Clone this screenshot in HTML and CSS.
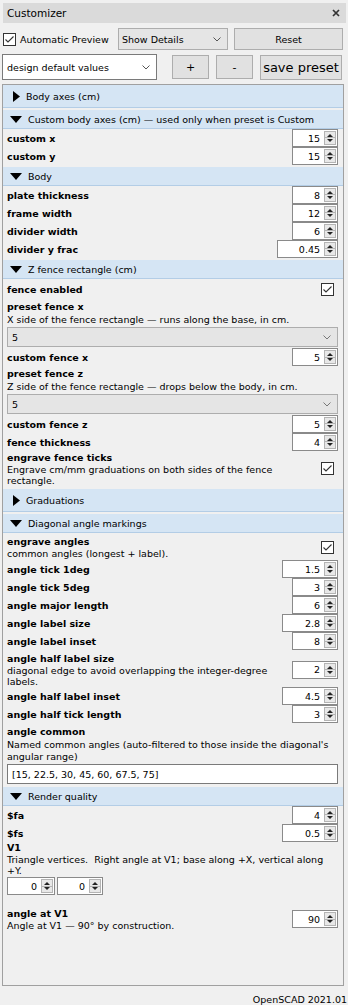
FILE: index.html
```html
<!DOCTYPE html>
<html>
<head>
<meta charset="utf-8">
<link rel="stylesheet" href="styles.css">
</head>
<body>
<div class="titlebar">
  <span>Customizer</span>
  <svg class="close" width="8" height="8" viewBox="0 0 8 8"><path d="M1 1L7 7M7 1L1 7" stroke="#333" stroke-width="1.7"/></svg>
</div>

<div class="bar1">
  <div class="autoprev">
    <svg class="cb" width="13" height="13" viewBox="0 0 13 13"><rect x="0.5" y="0.5" width="12" height="12" fill="#fff" stroke="#333"/><path d="M2.5 6.5L5 9L10.5 3.5" fill="none" stroke="#333" stroke-width="1.1"/></svg>
    <span>Automatic Preview</span>
  </div>
  <div class="combo gray details"><span>Show Details</span><svg class="chev" width="8" height="5" viewBox="0 0 8 5"><path d="M0.5 0.5L4 4L7.5 0.5" fill="none" stroke="#555"/></svg></div>
  <div class="btn reset">Reset</div>
</div>

<div class="bar2">
  <div class="combo white preset"><span>design default values</span><svg class="chev" width="8" height="5" viewBox="0 0 8 5"><path d="M0.5 0.5L4 4L7.5 0.5" fill="none" stroke="#555"/></svg></div>
  <div class="btn sq plus">+</div>
  <div class="btn sq minus">-</div>
  <div class="btn save">save preset</div>
</div>

<div class="frame">
  <div class="ghead col first"><svg class="tri-r" width="7" height="11" viewBox="0 0 7 11"><path d="M0 0L7 5.5L0 11Z" fill="#000"/></svg><span>Body axes (cm)</span></div>

  <div class="ghead"><svg class="tri-d" width="12" height="7" viewBox="0 0 12 7"><path d="M0 0H12L6 7Z" fill="#000"/></svg><span>Custom body axes (cm) — used only when preset is Custom</span></div>
  <div class="row"><span class="lbl">custom x</span><div class="spin"><span>15</span><i class="arr"></i></div></div>
  <div class="row"><span class="lbl">custom y</span><div class="spin"><span>15</span><i class="arr"></i></div></div>

  <div class="ghead"><svg class="tri-d" width="12" height="7" viewBox="0 0 12 7"><path d="M0 0H12L6 7Z" fill="#000"/></svg><span>Body</span></div>
  <div class="row"><span class="lbl">plate thickness</span><div class="spin"><span>8</span><i class="arr"></i></div></div>
  <div class="row"><span class="lbl">frame width</span><div class="spin"><span>12</span><i class="arr"></i></div></div>
  <div class="row"><span class="lbl">divider width</span><div class="spin"><span>6</span><i class="arr"></i></div></div>
  <div class="row"><span class="lbl">divider y frac</span><div class="spin w61"><span>0.45</span><i class="arr"></i></div></div>

  <div class="ghead"><svg class="tri-d" width="12" height="7" viewBox="0 0 12 7"><path d="M0 0H12L6 7Z" fill="#000"/></svg><span>Z fence rectangle (cm)</span></div>
  <div class="row cbrow"><span class="lbl">fence enabled</span><svg class="cb" width="13" height="13" viewBox="0 0 13 13"><rect x="0.5" y="0.5" width="12" height="12" fill="#fff" stroke="#333"/><path d="M2.5 6.5L5 9L10.5 3.5" fill="none" stroke="#333" stroke-width="1.1"/></svg></div>
  <div class="stack">
    <div class="lbl">preset fence x</div>
    <div class="desc">X side of the fence rectangle — runs along the base, in cm.</div>
    <div class="combo gray full"><span>5</span><svg class="chev" width="8" height="5" viewBox="0 0 8 5"><path d="M0.5 0.5L4 4L7.5 0.5" fill="none" stroke="#777"/></svg></div>
  </div>
  <div class="row"><span class="lbl">custom fence x</span><div class="spin"><span>5</span><i class="arr"></i></div></div>
  <div class="stack">
    <div class="lbl">preset fence z</div>
    <div class="desc">Z side of the fence rectangle — drops below the body, in cm.</div>
    <div class="combo gray full"><span>5</span><svg class="chev" width="8" height="5" viewBox="0 0 8 5"><path d="M0.5 0.5L4 4L7.5 0.5" fill="none" stroke="#777"/></svg></div>
  </div>
  <div class="row"><span class="lbl">custom fence z</span><div class="spin"><span>5</span><i class="arr"></i></div></div>
  <div class="row"><span class="lbl">fence thickness</span><div class="spin"><span>4</span><i class="arr"></i></div></div>
  <div class="blk ticks">
    <div class="info">
      <div class="lbl">engrave fence ticks</div>
      <div class="desc">Engrave cm/mm graduations on both sides of the fence<br>rectangle.</div>
    </div>
    <svg class="cb" width="13" height="13" viewBox="0 0 13 13"><rect x="0.5" y="0.5" width="12" height="12" fill="#fff" stroke="#333"/><path d="M2.5 6.5L5 9L10.5 3.5" fill="none" stroke="#333" stroke-width="1.1"/></svg>
  </div>

  <div class="ghead col"><svg class="tri-r" width="7" height="11" viewBox="0 0 7 11"><path d="M0 0L7 5.5L0 11Z" fill="#000"/></svg><span>Graduations</span></div>

  <div class="ghead"><svg class="tri-d" width="12" height="7" viewBox="0 0 12 7"><path d="M0 0H12L6 7Z" fill="#000"/></svg><span>Diagonal angle markings</span></div>
  <div class="blk angles">
    <div class="info">
      <div class="lbl">engrave angles</div>
      <div class="desc">common angles (longest + label).</div>
    </div>
    <svg class="cb" width="13" height="13" viewBox="0 0 13 13"><rect x="0.5" y="0.5" width="12" height="12" fill="#fff" stroke="#333"/><path d="M2.5 6.5L5 9L10.5 3.5" fill="none" stroke="#333" stroke-width="1.1"/></svg>
  </div>
  <div class="row"><span class="lbl">angle tick 1deg</span><div class="spin w56"><span>1.5</span><i class="arr"></i></div></div>
  <div class="row"><span class="lbl">angle tick 5deg</span><div class="spin"><span>3</span><i class="arr"></i></div></div>
  <div class="row"><span class="lbl">angle major length</span><div class="spin"><span>6</span><i class="arr"></i></div></div>
  <div class="row"><span class="lbl">angle label size</span><div class="spin w56"><span>2.8</span><i class="arr"></i></div></div>
  <div class="row"><span class="lbl">angle label inset</span><div class="spin"><span>8</span><i class="arr"></i></div></div>
  <div class="blk halfsize">
    <div class="info">
      <div class="lbl">angle half label size</div>
      <div class="desc">diagonal edge to avoid overlapping the integer-degree<br>labels.</div>
    </div>
    <div class="spin"><span>2</span><i class="arr"></i></div>
  </div>
  <div class="row"><span class="lbl">angle half label inset</span><div class="spin w56"><span>4.5</span><i class="arr"></i></div></div>
  <div class="row"><span class="lbl">angle half tick length</span><div class="spin"><span>3</span><i class="arr"></i></div></div>
  <div class="stack common">
    <div class="lbl">angle common</div>
    <div class="desc">Named common angles (auto-filtered to those inside the diagonal's<br>angular range)</div>
    <div class="textin">[15, 22.5, 30, 45, 60, 67.5, 75]</div>
  </div>

  <div class="ghead"><svg class="tri-d" width="12" height="7" viewBox="0 0 12 7"><path d="M0 0H12L6 7Z" fill="#000"/></svg><span>Render quality</span></div>
  <div class="row"><span class="lbl">$fa</span><div class="spin"><span>4</span><i class="arr"></i></div></div>
  <div class="row"><span class="lbl">$fs</span><div class="spin w56"><span>0.5</span><i class="arr"></i></div></div>
  <div class="stack v1">
    <div class="lbl">V1</div>
    <div class="desc">Triangle vertices.&nbsp; Right angle at V1; base along +X, vertical along<br>+Y.</div>
    <div class="vec">
      <div class="spin w48"><span>0</span><i class="arr"></i></div>
      <div class="spin"><span>0</span><i class="arr"></i></div>
    </div>
  </div>
  <div class="blk atv1">
    <div class="info">
      <div class="lbl">angle at V1</div>
      <div class="desc">Angle at V1 — 90° by construction.</div>
    </div>
    <div class="spin"><span>90</span><i class="arr"></i></div>
  </div>
</div>

<div class="footer">OpenSCAD 2021.01</div>
</body>
</html>
```

FILE: styles.css
```css
html, body {
  margin: 0;
  padding: 0;
}
body {
  width: 348px;
  height: 1005px;
  overflow: hidden;
  background: #f0f0f0;
  font-family: "DejaVu Sans", "Noto Sans", sans-serif;
  font-size: 9.5px;
  line-height: 11px;
  color: #000;
}

/* title */
.titlebar {
  margin: 3px 2px 0 3px;
  height: 20px;
  background: #dadada;
  display: flex;
  align-items: center;
  justify-content: space-between;
  padding: 0 6px 0 4px;
  font-size: 10.5px;
  color: #000;
}
.close { display: block; }

/* first toolbar */
.bar1 {
  display: flex;
  align-items: center;
  height: 22px;
  margin-top: 5px;
  padding-left: 3px;
}
.autoprev {
  width: 115px;
  display: flex;
  align-items: center;
  gap: 4px;
}
.cb { display: block; flex: none; }

.combo {
  display: flex;
  align-items: center;
  justify-content: space-between;
  box-sizing: border-box;
  padding: 0 6px 0 3px;
}
.combo.gray {
  background: #e5e5e5;
  border: 1px solid #adadad;
}
.combo.white {
  background: #fff;
  border: 1px solid #7a7a7a;
}
.chev { display: block; flex: none; }
.details {
  width: 110px;
  height: 22px;
}

.btn {
  display: flex;
  align-items: center;
  justify-content: center;
  box-sizing: border-box;
  background: #e1e1e1;
  border: 1px solid #adadad;
}
.reset {
  margin-left: 6px;
  width: 109px;
  height: 22px;
}

/* second toolbar */
.bar2 {
  display: flex;
  align-items: center;
  height: 26px;
  margin-top: 4px;
  padding-left: 2px;
}
.preset {
  width: 155px;
  height: 26px;
  padding-left: 4px;
}
.sq {
  width: 37px;
  height: 24px;
  font-size: 11px;
}
.plus { margin-left: 15px; }
.minus { margin-left: 7px; }
.save {
  margin-left: 7px;
  width: 82px;
  height: 25px;
  font-size: 13px;
}

/* scroll frame */
.frame {
  margin: 4px 0 0 2px;
  width: 342px;
  height: 902px;
  box-sizing: border-box;
  border: 1px solid #a0a0a0;
  background: #f0f0f0;
  overflow: hidden;
}

.ghead {
  display: flex;
  align-items: center;
  box-sizing: border-box;
  height: 19px;
  margin-top: 2px;
  padding-left: 7px;
  background: #d5e5f4;
  border-bottom: 1px solid #b3cde6;
  color: #000;
}
.ghead.first { margin-top: 0; }
.ghead.col {
  height: 23px;
  padding-left: 10px;
}
.tri-r { display: block; margin-right: 6px; }
.tri-d { display: block; margin-right: 6px; }

.lbl {
  font-weight: bold;
  line-height: 13px;
  color: #000;
}
.desc {
  white-space: nowrap;
  color: #000;
}

.row {
  display: flex;
  align-items: center;
  justify-content: space-between;
  height: 18px;
  padding: 0 5px 0 4px;
}
.row.cbrow { height: 20px; }
.row.cbrow .cb { margin-right: 4px; }

.blk {
  display: flex;
  align-items: center;
  justify-content: space-between;
  padding: 2px 5px 0 4px;
}
.blk > .cb { margin-right: 4px; }
.blk.ticks { padding-top: 0; padding-bottom: 1px; }
.blk.angles { padding-bottom: 1px; }
.blk.atv1 { padding-top: 12px; }

.stack {
  padding: 1px 5px 1px 4px;
}
.stack .lbl { line-height: 14px; }
.stack .desc { line-height: 12px; }
.stack.common { padding-top: 2px; }
.stack.v1 { padding-top: 0; padding-bottom: 0; }
.stack.v1 .lbl { line-height: 12px; }
.stack.v1 .desc { line-height: 11px; }

.combo.full {
  margin-top: 1px;
  height: 20px;
  padding-left: 4px;
}

.textin {
  margin-top: 1px;
  height: 20px;
  box-sizing: border-box;
  background: #fff;
  border: 1px solid #7a7a7a;
  padding-left: 4px;
  display: flex;
  align-items: center;
}

.vec {
  display: flex;
  gap: 2px;
  margin-top: 1px;
}

/* spin box */
.spin {
  display: flex;
  align-items: center;
  justify-content: flex-end;
  width: 46px;
  height: 18px;
  box-sizing: border-box;
  background: #fff;
  border: 1px solid #8a8a8a;
  padding-right: 1px;
  flex: none;
}
.spin > span { padding-right: 4px; }
.spin.w56 { width: 56px; }
.spin.w61 { width: 61px; }
.spin.w48 { width: 48px; }

.arr {
  position: relative;
  display: block;
  width: 12px;
  height: 14px;
  box-sizing: border-box;
  border: 1px solid #b4b4b4;
  background: linear-gradient(#e8e8e8 0 5.5px, #b4b4b4 5.5px 6.5px, #e8e8e8 6.5px);
}
.arr::before,
.arr::after {
  content: "";
  position: absolute;
  left: 2px;
  width: 0;
  height: 0;
  border-left: 3px solid transparent;
  border-right: 3px solid transparent;
}
.arr::before {
  top: 2px;
  border-bottom: 3px solid #222;
}
.arr::after {
  bottom: 2px;
  border-top: 3px solid #222;
}

.footer {
  margin-top: 8px;
  text-align: right;
  padding-right: 1px;
  line-height: 11px;
  color: #000;
}
```
